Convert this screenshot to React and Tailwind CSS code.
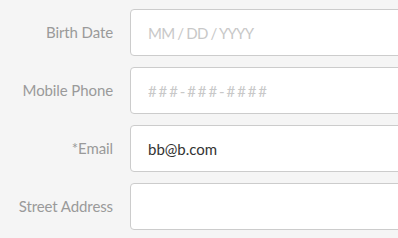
import { useState } from 'react';

const fields = [
  { label: 'Birth Date', placeholder: 'MM / DD / YYYY', value: '', ph: 'placeholder:tracking-[-0.8px]' },
  { label: 'Mobile Phone', placeholder: '###-###-####', value: '', ph: 'placeholder:tracking-[1.9px]' },
  { label: '*Email', placeholder: '', value: 'bb@b.com', ph: '' },
  { label: 'Street Address', placeholder: '', value: '', ph: '' },
];

export default function App() {
  const [values, setValues] = useState(fields.map((f) => f.value));

  return (
    <div className="h-[238px] w-[398px] overflow-hidden bg-[#f5f5f5] pt-[9px] font-['Lato',sans-serif]">
      <div className="flex flex-col gap-[11px]">
        {fields.map((f, i) => (
          <div key={f.label} className="flex items-center">
            <label className="w-[113px] shrink-0 text-right text-[15px] text-[#9a9a9a] tracking-[-0.1px]">{f.label}</label>
            <input
              className={`ml-[17px] h-[47px] w-[290px] shrink-0 rounded-[4px] border border-[#ccc] bg-white px-[17px] text-[15px] text-[#333] outline-none placeholder:text-[#c8c8c8] ${f.ph}`}
              placeholder={f.placeholder}
              value={values[i]}
              onChange={(e) => setValues(values.map((v, j) => (j === i ? e.target.value : v)))}
            />
          </div>
        ))}
      </div>
    </div>
  );
}
